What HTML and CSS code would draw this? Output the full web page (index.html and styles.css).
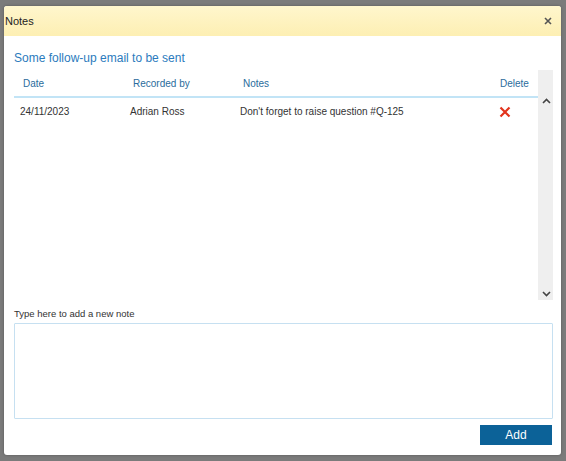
FILE: index.html
```html
<!DOCTYPE html>
<html lang="en">
<head>
  <meta charset="UTF-8">
  <title>Notes</title>
  <link rel="stylesheet" href="styles.css">
</head>
<body>
  <div class="modal">
    <div class="modal-header">
      <span class="modal-title">Notes</span>
      <svg class="close" width="8" height="8" viewBox="0 0 8 8">
        <path d="M1 1L7 7M7 1L1 7" stroke="#555" stroke-width="1.6"/>
      </svg>
    </div>
    <div class="modal-body">
      <h2>Some follow-up email to be sent</h2>

      <div class="lista">
        <div class="tabla-wrap">
          <table>
            <thead>
              <tr>
                <th class="col-fecha">Date</th>
                <th class="col-quien">Recorded by</th>
                <th class="col-nota">Notes</th>
                <th class="col-borrar">Delete</th>
              </tr>
            </thead>
            <tbody>
              <tr>
                <td>24/11/2023</td>
                <td>Adrian Ross</td>
                <td>Don't forget to raise question #Q-125</td>
                <td class="borrar">
                  <svg width="12" height="12" viewBox="0 0 12 12">
                    <path d="M1.5 1.5L10.5 10.5M10.5 1.5L1.5 10.5" stroke="#e2341d" stroke-width="2.2"/>
                  </svg>
                </td>
              </tr>
            </tbody>
          </table>
        </div>
        <div class="scrollbar">
          <div class="scroll-top"></div>
          <svg class="flecha" width="9" height="6" viewBox="0 0 9 6">
            <path d="M1 5L4.5 1.5L8 5" fill="none" stroke="#444" stroke-width="1.6"/>
          </svg>
          <div class="scroll-track"></div>
          <svg class="flecha" width="9" height="6" viewBox="0 0 9 6">
            <path d="M1 1L4.5 4.5L8 1" fill="none" stroke="#444" stroke-width="1.6"/>
          </svg>
        </div>
      </div>

      <label for="nota">Type here to add a new note</label>
      <textarea id="nota"></textarea>

      <div class="pie">
        <button>Add</button>
      </div>
    </div>
  </div>
</body>
</html>
```

FILE: styles.css
```css
body {
  margin: 0;
  height: 461px;
  overflow: hidden;
  background: #7b7b7b;
  font-family: "Liberation Sans", Arial, sans-serif;
  color: #333;
}
.modal {
  margin: 6px 5px 0 4px;
  height: 449px;
  background: white;
  border-radius: 3px;
  display: flex;
  flex-direction: column;
  overflow: hidden;
  box-shadow: 0 0 3px rgba(0, 0, 0, 0.3);
}
.modal-header {
  height: 30px;
  flex-shrink: 0;
  background: linear-gradient(#fff6cd, #fdefb3);
  display: flex;
  align-items: center;
  justify-content: space-between;
  padding: 0 9px 0 1px;
}
.modal-title {
  font-size: 11px;
  color: #222;
}
.modal-body {
  padding: 0 8px 0 10px;
  display: flex;
  flex-direction: column;
  flex: 1;
}
h2 {
  margin: 15px 0 0;
  font-size: 12px;
  font-weight: normal;
  color: #2b7bbd;
  height: 14px;
  line-height: 14px;
}
.lista {
  display: flex;
  height: 230px;
  margin-top: 5px;
}
.tabla-wrap {
  flex: 1;
}
table {
  width: 100%;
  border-collapse: collapse;
  font-size: 10px;
}
th {
  text-align: left;
  font-weight: normal;
  color: #2a6c9c;
  height: 26px;
  padding: 0 0 0 9px;
  border-bottom: 2px solid #c2e4f6;
}
td {
  height: 24px;
  padding: 0 0 0 6px;
  color: #333;
}
.col-fecha { width: 101px; }
.col-quien { width: 101px; }
.col-borrar { width: 38px; padding-left: 0; }
.borrar {
  padding: 3px 0 0 0;
}
.borrar svg {
  margin-left: -1px;
}
.scrollbar {
  width: 15px;
  background: #efefef;
  display: flex;
  flex-direction: column;
  align-items: center;
}
.scroll-top {
  height: 28px;
}
.flecha {
  margin: 0 0 0 1px;
}
.scroll-track {
  flex: 1;
}
.scrollbar .flecha:last-child {
  margin-bottom: 3px;
}
label {
  font-size: 9.5px;
  color: #333;
  margin-top: 8px;
  height: 12px;
  line-height: 12px;
}
textarea {
  box-sizing: border-box;
  margin-top: 3px;
  height: 96px;
  border: 1px solid #c6e0f1;
  border-radius: 1px;
  padding: 2px;
  resize: none;
  font-family: inherit;
}
.pie {
  display: flex;
  justify-content: flex-end;
  margin-top: 6px;
}
button {
  width: 72px;
  height: 20px;
  margin-right: 1px;
  border: none;
  background: #0c6298;
  color: white;
  font-family: inherit;
  font-size: 12px;
  padding: 0;
}
```
